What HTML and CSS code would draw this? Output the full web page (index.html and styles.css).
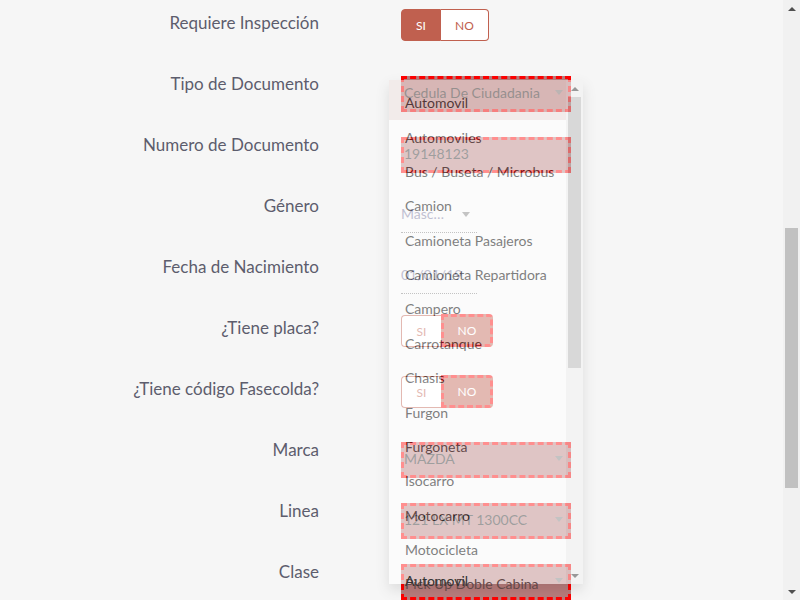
FILE: index.html
```html
<!DOCTYPE html>
<html lang="es">
<head>
<meta charset="utf-8">
<title>Formulario</title>
<link rel="stylesheet" href="styles.css">
</head>
<body>
<div class="app">
  <main class="page">
    <form class="form">
      <div class="row">
        <label class="lbl">Requiere Inspección</label>
        <div class="ctl">
          <div class="toggle">
            <span class="tg tg-si tg-on">SI</span>
            <span class="tg tg-no tg-off">NO</span>
          </div>
        </div>
      </div>
      <div class="row">
        <label class="lbl">Tipo de Documento</label>
        <div class="ctl">
          <div class="field"><span class="val">Cedula De Ciudadania</span><span class="caret"></span></div>
        </div>
      </div>
      <div class="row">
        <label class="lbl">Numero de Documento</label>
        <div class="ctl">
          <div class="field"><span class="val">19148123</span></div>
        </div>
      </div>
      <div class="row">
        <label class="lbl">Género</label>
        <div class="ctl">
          <div class="mini"><span class="mini-val">Masc…</span><span class="caret mini-caret"></span></div>
        </div>
      </div>
      <div class="row">
        <label class="lbl">Fecha de Nacimiento</label>
        <div class="ctl">
          <div class="mini"><span class="mini-val">01/01/1980</span></div>
        </div>
      </div>
      <div class="row">
        <label class="lbl">¿Tiene placa?</label>
        <div class="ctl">
          <div class="toggle">
            <span class="tg tg-si tg-off-l">SI</span>
            <span class="tg tg-no tg-err">NO</span>
          </div>
        </div>
      </div>
      <div class="row">
        <label class="lbl">¿Tiene código Fasecolda?</label>
        <div class="ctl">
          <div class="toggle">
            <span class="tg tg-si tg-off-l">SI</span>
            <span class="tg tg-no tg-err">NO</span>
          </div>
        </div>
      </div>
      <div class="row">
        <label class="lbl">Marca</label>
        <div class="ctl">
          <div class="field"><span class="val">MAZDA</span><span class="caret"></span></div>
        </div>
      </div>
      <div class="row">
        <label class="lbl">Linea</label>
        <div class="ctl">
          <div class="field"><span class="val">121 LX MT 1300CC</span><span class="caret"></span></div>
        </div>
      </div>
      <div class="row">
        <label class="lbl">Clase</label>
        <div class="ctl">
          <div class="field"><span class="val val-top">Automovil</span><span class="caret"></span></div>
        </div>
      </div>
    </form>

    <div class="dropdown">
      <ul class="dd-list">
        <li class="dd-item active">Automovil</li>
        <li class="dd-item">Automoviles</li>
        <li class="dd-item">Bus / Buseta / Microbus</li>
        <li class="dd-item">Camion</li>
        <li class="dd-item">Camioneta Pasajeros</li>
        <li class="dd-item">Camioneta Repartidora</li>
        <li class="dd-item">Campero</li>
        <li class="dd-item">Carrotanque</li>
        <li class="dd-item">Chasis</li>
        <li class="dd-item">Furgon</li>
        <li class="dd-item">Furgoneta</li>
        <li class="dd-item">Isocarro</li>
        <li class="dd-item">Motocarro</li>
        <li class="dd-item">Motocicleta</li>
        <li class="dd-item">Pick Up Doble Cabina</li>
      </ul>
      <div class="dd-sb">
        <div class="sb-btn"><span class="tri-up"></span></div>
        <div class="dd-thumb"></div>
        <div class="sb-fill"></div>
        <div class="sb-btn"><span class="tri-down"></span></div>
      </div>
    </div>
  </main>

  <div class="vsb">
    <div class="sb-btn"><span class="tri-up"></span></div>
    <div class="vsb-track"><div class="vsb-thumb"></div></div>
    <div class="sb-btn"><span class="tri-down"></span></div>
  </div>
</div>
</body>
</html>
```

FILE: styles.css
```css
* {
  box-sizing: border-box;
}

html,
body {
  margin: 0;
  height: 100%;
}

body {
  font-family: Lato, "Liberation Sans", Arial, sans-serif;
  background: #f6f6f6;
  overflow: hidden;
}

.app {
  display: flex;
  height: 600px;
}

.page {
  flex: 1;
  position: relative;
  overflow: hidden;
}

.form {
  margin: 0;
  padding-top: 15px;
}

.row {
  display: grid;
  grid-template-columns: 319px 170px;
  column-gap: 82px;
  height: 61px;
  align-items: start;
}

.lbl {
  font-size: 17px;
  line-height: 17px;
  margin-top: -1px;
  color: #5d5d6d;
  text-align: right;
  white-space: nowrap;
}

/* toggles */
.toggle {
  display: flex;
  margin-top: -6px;
  height: 32px;
}

.tg {
  display: flex;
  align-items: center;
  justify-content: center;
  height: 32px;
  font-size: 12px;
}

.tg-si {
  width: 40px;
}

.tg-no {
  width: 48px;
}

.tg-on {
  background: #c0604f;
  color: #fff;
  border: 1px solid #c0604f;
  border-radius: 4px 0 0 4px;
}

.tg-off {
  background: #fff;
  color: #c0604f;
  border: 1px solid #c0604f;
  border-left: 0;
  border-radius: 0 4px 4px 0;
}

.tg-off-l {
  background: #fff;
  color: #c0604f;
  border: 1px solid #c0604f;
  border-right: 0;
  border-radius: 4px 0 0 4px;
  margin-top: 1px;
}

.tg-err {
  width: 52px;
  height: 33px;
  background: #c0604f;
  color: #fff;
  border: 3px dashed #ff0000;
  border-radius: 0 4px 4px 0;
}

/* fields */
.field {
  display: flex;
  align-items: center;
  height: 36px;
  border: 3px dashed #ff0000;
  background: #b87c7c;
  padding-bottom: 3px;
}

.val {
  font-size: 14px;
  line-height: 20px;
  color: #222;
  white-space: nowrap;
}

.val-top {
  position: relative;
  z-index: 2;
  padding-left: 1px;
  color: #333;
}

.caret {
  margin-left: auto;
  margin-right: 5px;
  width: 0;
  height: 0;
  border-top: 5px solid #777;
  border-left: 4px solid transparent;
  border-right: 4px solid transparent;
}

.mini {
  display: flex;
  align-items: center;
  width: 76px;
  height: 35px;
  border-bottom: 1px dotted #777;
  padding-bottom: 2px;
}

.mini-val {
  font-size: 14px;
  line-height: 20px;
  color: #6f6f98;
  white-space: nowrap;
  width: 61px;
  overflow: hidden;
}

.mini-caret {
  margin-left: 0;
}

/* dropdown */
.dropdown {
  position: absolute;
  left: 389px;
  top: 80px;
  width: 194px;
  height: 504px;
  display: flex;
  background: #fff;
  opacity: 0.56;
  box-shadow: 0 6px 12px rgba(0, 0, 0, 0.18);
  z-index: 1;
}

.dd-list {
  flex: 1;
  min-width: 0;
  margin: 0;
  padding: 0;
  list-style: none;
  height: 504px;
}

.dd-item {
  font-size: 14px;
  line-height: 20px;
  padding: 7.2px 16px;
  color: #222;
  white-space: nowrap;
}

.dd-item.active {
  padding-top: 13.2px;
  background: #f0e4e2;
  color: #000;
}

.dd-sb {
  width: 17px;
  flex: none;
  display: flex;
  flex-direction: column;
  background: #f1f1f1;
}

.sb-btn {
  height: 17px;
  display: flex;
  align-items: center;
  justify-content: center;
  flex: none;
}

.sb-fill {
  flex: 1;
}

.dd-thumb {
  height: 271px;
  margin: 0 2px;
  background: #c1c1c1;
  flex: none;
}

.tri-up {
  width: 0;
  height: 0;
  border-bottom: 4px solid #505050;
  border-left: 4px solid transparent;
  border-right: 4px solid transparent;
}

.tri-down {
  width: 0;
  height: 0;
  border-top: 4px solid #505050;
  border-left: 4px solid transparent;
  border-right: 4px solid transparent;
}

/* page scrollbar */
.vsb {
  width: 17px;
  flex: none;
  display: flex;
  flex-direction: column;
  background: #f1f1f1;
}

.vsb-track {
  flex: 1;
  padding-top: 211px;
}

.vsb-thumb {
  height: 260px;
  margin: 0 2px;
  background: #c1c1c1;
}
```
